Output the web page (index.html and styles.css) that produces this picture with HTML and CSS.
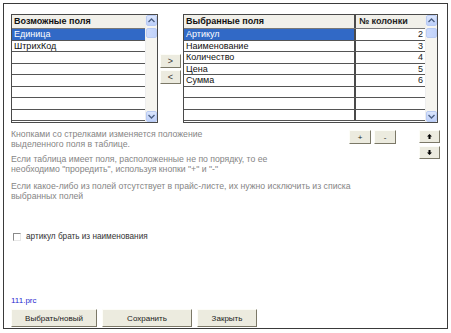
FILE: index.html
```html
<!DOCTYPE html>
<html>
<head>
<meta charset="utf-8">
<link rel="stylesheet" href="styles.css">
</head>
<body>
<div class="frame">
  <div class="top">
    <div class="grid grid-left">
      <div class="gbody">
        <div class="row head"><div class="cell c-left">Возможные поля</div></div>
        <div class="row sel"><div class="cell c-left">Единица</div></div>
        <div class="row"><div class="cell c-left">ШтрихКод</div></div>
        <div class="row"><div class="cell c-left"></div></div>
        <div class="row"><div class="cell c-left"></div></div>
        <div class="row"><div class="cell c-left"></div></div>
        <div class="row"><div class="cell c-left"></div></div>
        <div class="row"><div class="cell c-left"></div></div>
        <div class="row"><div class="cell c-left"></div></div>
      </div>
      <div class="sbar">
        <div class="sbtn"><svg width="7" height="5" viewBox="0 0 7 5"><path d="M0.5 4 L3.5 1 L6.5 4" fill="none" stroke="#4d6185" stroke-width="1.4"/></svg></div>
        <div class="thumb"></div>
        <div class="track"></div>
        <div class="sbtn"><svg width="7" height="5" viewBox="0 0 7 5"><path d="M0.5 1 L3.5 4 L6.5 1" fill="none" stroke="#4d6185" stroke-width="1.4"/></svg></div>
      </div>
    </div>
    <div class="movers">
      <button class="btn mv">&gt;</button>
      <button class="btn mv">&lt;</button>
    </div>
    <div class="grid grid-right">
      <div class="gbody">
        <div class="row head"><div class="cell c-name">Выбранные поля</div><div class="cell c-num hnum">№ колонки</div></div>
        <div class="row sel"><div class="cell c-name">Артикул</div><div class="cell c-num">2</div></div>
        <div class="row"><div class="cell c-name">Наименование</div><div class="cell c-num">3</div></div>
        <div class="row"><div class="cell c-name">Количество</div><div class="cell c-num">4</div></div>
        <div class="row"><div class="cell c-name">Цена</div><div class="cell c-num">5</div></div>
        <div class="row"><div class="cell c-name">Сумма</div><div class="cell c-num">6</div></div>
        <div class="row"><div class="cell c-name"></div><div class="cell c-num"></div></div>
        <div class="row"><div class="cell c-name"></div><div class="cell c-num"></div></div>
        <div class="row"><div class="cell c-name"></div><div class="cell c-num"></div></div>
      </div>
      <div class="sbar">
        <div class="sbtn"><svg width="7" height="5" viewBox="0 0 7 5"><path d="M0.5 4 L3.5 1 L6.5 4" fill="none" stroke="#4d6185" stroke-width="1.4"/></svg></div>
        <div class="thumb"></div>
        <div class="track"></div>
        <div class="sbtn"><svg width="7" height="5" viewBox="0 0 7 5"><path d="M0.5 1 L3.5 4 L6.5 1" fill="none" stroke="#4d6185" stroke-width="1.4"/></svg></div>
      </div>
    </div>
  </div>

  <div class="info">
    <div class="notes">
      <p class="note">Кнопками со стрелками изменяется положение<br>выделенного поля в таблице.</p>
      <p class="note">Если таблица имеет поля, расположенные не по порядку, то ее<br>необходимо "проредить", используя кнопки "+" и "-"</p>
    </div>
    <div class="pm">
      <button class="btn small">+</button>
      <button class="btn small">-</button>
    </div>
    <div class="arrows">
      <button class="btn arr"><svg width="5" height="5" viewBox="0 0 5 5"><path d="M2.5 0 L5 2.5 L3.5 2.5 L3.5 5 L1.5 5 L1.5 2.5 L0 2.5 Z" fill="#000"/></svg></button>
      <button class="btn arr"><svg width="5" height="5" viewBox="0 0 5 5"><path d="M2.5 5 L5 2.5 L3.5 2.5 L3.5 0 L1.5 0 L1.5 2.5 L0 2.5 Z" fill="#000"/></svg></button>
    </div>
  </div>
  <p class="note note3">Если какое-либо из полей отсутствует в прайс-листе, их нужно исключить из списка<br>выбранных полей</p>

  <label class="check"><span class="box"></span><span>артикул брать из наименования</span></label>

  <div class="spacer"></div>
  <div class="file">111.prc</div>
  <div class="actions">
    <button class="btn act a1">Выбрать/новый</button>
    <button class="btn act a2">Сохранить</button>
    <button class="btn act a3">Закрыть</button>
  </div>
</div>
</body>
</html>
```
FILE: styles.css
```css
html, body {
  margin: 0;
  padding: 0;
  background: #fff;
}
body {
  font-family: "Liberation Sans", Arial, sans-serif;
  width: 451px;
  height: 333px;
  overflow: hidden;
}
.frame {
  box-sizing: border-box;
  margin: 3px 0 0 3px;
  width: 445px;
  height: 326px;
  border: 1px solid #3a3a3a;
  display: flex;
  flex-direction: column;
  padding: 10px 7px 1px 7px;
}
.top {
  display: flex;
  height: 109px;
}
.grid {
  box-sizing: border-box;
  height: 109px;
  border: 1px solid #4a4a4a;
  display: flex;
  background: #fff;
  overflow: hidden;
}
.grid-left { width: 147px; }
.grid-right { width: 255px; margin-left: 2px; }
.gbody {
  flex: 1;
  overflow: hidden;
}
.row {
  display: flex;
  height: 10.5px;
  border-bottom: 1px solid #555;
  font-size: 9px;
  line-height: 10.5px;
  color: #111;
}
.row.head {
  height: 13px;
  line-height: 13px;
  background: #f1f0ea;
  font-weight: bold;
  border-bottom: 1px solid #777;
}
.row.sel {
  background: #3169c6;
  color: #fff;
}
.cell {
  padding-left: 2px;
  white-space: nowrap;
  overflow: hidden;
}
.c-left { flex: 1; }
.c-name {
  width: 168px;
  border-right: 2px solid #4a4a4a;
}
.c-num {
  flex: 1;
  text-align: right;
  padding-right: 2px;
  background: #fff;
  color: #222;
}
.row.head .c-num { background: #f1f0ea; }
.hnum { text-align: left; padding-left: 3px; }
.sbar {
  width: 11px;
  display: flex;
  flex-direction: column;
  background: #f6f5f0;
  border-left: 1px solid #eeeeee;
}
.sbtn {
  box-sizing: border-box;
  height: 11px;
  border: 1px solid #b9cbf3;
  border-radius: 2px;
  background: linear-gradient(#dbe6fd, #bdcff9);
  display: flex;
  align-items: center;
  justify-content: center;
}
.thumb {
  box-sizing: border-box;
  height: 10px;
  margin-top: 2px;
  border: 1px solid #b9cbf3;
  border-radius: 2px;
  background: linear-gradient(90deg, #cddbfc, #c1d2fa);
}
.track { flex: 1; }
.btn {
  box-sizing: border-box;
  margin: 0;
  padding: 0;
  background: #ecebdf;
  border: 1px solid;
  border-color: #fdfdf8 #7b7867 #7b7867 #fdfdf8;
  font-family: "Liberation Sans", Arial, sans-serif;
  font-size: 8px;
  color: #222;
  display: flex;
  align-items: center;
  justify-content: center;
}
.movers {
  display: flex;
  flex-direction: column;
  gap: 2px;
  margin-left: 2px;
  padding-top: 40px;
}
.mv {
  width: 21px;
  height: 14px;
  font-size: 9px;
  color: #333;
}
.info {
  display: flex;
  margin-top: 6px;
}
.notes { flex: 1; }
.note {
  margin: 0 0 5px 0;
  font-size: 8.7px;
  line-height: 10px;
  color: #858585;
}
.pm {
  display: flex;
  gap: 3px;
  margin-top: 1px;
  margin-right: 23px;
}
.small {
  width: 22px;
  height: 14px;
  font-size: 8px;
}
.arrows {
  display: flex;
  flex-direction: column;
  gap: 3px;
  margin-top: 1px;
}
.arr {
  width: 21px;
  height: 13px;
}
.note3 { margin-top: 2px; }
.check {
  display: flex;
  align-items: center;
  gap: 5px;
  margin-top: 26px;
  margin-left: 2px;
  font-size: 8.2px;
  color: #333;
}
.box {
  box-sizing: border-box;
  width: 8px;
  height: 8px;
  border: 1px solid;
  border-color: #8a8a8a #e8e8e8 #e8e8e8 #8a8a8a;
  background: #fff;
}
.spacer { flex: 1; }
.file {
  font-size: 8px;
  color: #2a2ad0;
  margin-bottom: 4px;
}
.actions {
  display: flex;
  gap: 5px;
}
.act {
  height: 18px;
  font-size: 8px;
}
.a1 { width: 86px; }
.a2 { width: 90px; }
.a3 { width: 60px; }
```
